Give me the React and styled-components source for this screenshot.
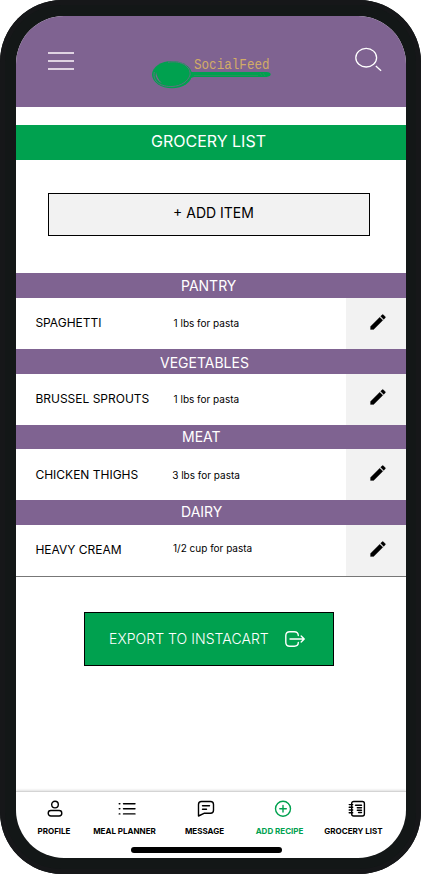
import React from "react";
import styled, { createGlobalStyle } from "styled-components";

const PURPLE = "#7f6391";
const GREEN = "#00a14f";

const Global = createGlobalStyle`
  * { box-sizing: border-box; }
  body { margin: 0; background: #fff; font-family: Inter, "Liberation Sans", sans-serif; color: #000; }
  svg { display: block; flex: none; }
`;

const Phone = styled.div`
  width: 421px;
  height: 874px;
  padding: 16px 15px 16px 16px;
  border-radius: 62px;
  background: #131717;
  box-shadow: inset 0 0 0 5px #161719;
`;
const Screen = styled.div`
  height: 842px;
  display: flex;
  flex-direction: column;
  overflow: hidden;
  border-radius: 48px;
  background: #fff;
`;
const Header = styled.header`
  height: 91px;
  flex: none;
  display: flex;
  align-items: flex-start;
  background: ${PURPLE};
`;
const PlainButton = styled.button`
  border: 0;
  padding: 0;
  background: none;
  color: inherit;
  font-family: inherit;
`;
const MenuButton = styled(PlainButton)`
  width: 26px;
  height: 18px;
  margin: 36px 0 0 32px;
`;
const Logo = styled.div`
  display: grid;
  width: 120px;
  height: 34px;
  margin: 41px 0 0 78px;
  > * { grid-area: 1 / 1; }
`;
const LogoText = styled.span`
  height: 15px;
  margin: 2px 0 0 42px;
  font: 12.6px/15px "Liberation Mono", monospace;
  color: #d2ab67;
  white-space: nowrap;
  transform: scaleY(1.18);
`;
const SearchButton = styled(PlainButton)`
  margin: 31px 0 0 83px;
`;
const Title = styled.h1`
  flex: none;
  height: 35px;
  margin: 18px 0 0;
  padding-right: 5px;
  background: ${GREEN};
  color: #fff;
  font-size: 16px;
  font-weight: 400;
  line-height: 32px;
  text-align: center;
`;
const AddButton = styled(PlainButton)`
  flex: none;
  width: 322px;
  height: 43px;
  margin: 33px 0 37px 32px;
  padding: 0 0 4px 9px;
  border: 1px solid #000;
  background: #f2f2f2;
  font-size: 14px;
`;
const Band = styled.h2`
  flex: none;
  height: ${(p) => p.$height}px;
  margin: 0;
  padding-left: ${(p) => p.$indent}px;
  background: ${PURPLE};
  color: #fff;
  font-size: 14px;
  font-weight: 400;
  line-height: ${(p) => p.$line}px;
`;
const Row = styled.div`
  flex: none;
  display: grid;
  grid-template-columns: ${(p) => p.$split}px 1fr 60px;
  height: 51px;
`;
const ItemName = styled.span`
  padding-left: 19.4px;
  font-size: 12px;
  line-height: ${(p) => p.$line}px;
`;
const Amount = styled.span`
  font-size: 10px;
  line-height: ${(p) => p.$line}px;
`;
const EditButton = styled(PlainButton)`
  display: flex;
  align-items: flex-start;
  padding: ${(p) => p.$top}px 0 0 22px;
  background: #f2f2f2;
`;
const Divider = styled.div`
  flex: none;
  height: 1px;
  background: #777;
`;
const ExportButton = styled(PlainButton)`
  flex: none;
  display: flex;
  align-items: center;
  gap: 16px;
  width: 250px;
  height: 54px;
  margin: 35px 0 0 68px;
  padding: 0 0 1px 24px;
  border: 1px solid #000;
  background: ${GREEN};
  color: #fff;
  font-size: 14px;
  font-weight: 300;
  letter-spacing: 0.05px;
  white-space: nowrap;
`;
const BottomNav = styled.nav`
  flex: none;
  display: flex;
  height: 67px;
  margin-top: auto;
  padding: 8px 0 0 21px;
  border-top: 1px solid #d4d4d4;
  box-shadow: 0 -1px 2px rgba(0, 0, 0, 0.12);
  position: relative;
`;
const NavItem = styled.a`
  flex: none;
  display: flex;
  flex-direction: column;
  align-items: center;
  width: ${(p) => p.$width}px;
  margin-right: ${(p) => p.$gap}px;
  color: ${(p) => (p.$active ? GREEN : "#000")};
`;
const NavIcon = styled.span`
  height: 17px;
  padding-left: ${(p) => p.$shift}px;
`;
const NavLabel = styled.span`
  margin-top: 8px;
  font-size: 8px;
  font-weight: 700;
  line-height: 12px;
  white-space: nowrap;
`;
const HomeIndicator = styled.div`
  position: absolute;
  left: 115px;
  bottom: 5px;
  width: 151px;
  height: 6px;
  border-radius: 3px;
  background: #000;
`;

const MenuIcon = () => (
  <svg width="26" height="18" viewBox="0 0 26 18" fill="#dfd3e2">
    <path d="M0 0h26v2H0zM0 8h26v2H0zM0 16h26v2H0z" />
  </svg>
);
const SpoonIcon = () => (
  <svg width="120" height="34" viewBox="0 0 120 34">
    <path d="M34 14.8 41 15h73.500q4.200 .3 4.200 2.300t-4.200 2.700H42q-4 .4-8 4z" fill={GREEN} />
    <ellipse cx="20" cy="17.600" rx="20" ry="13.600" fill={GREEN} />
    <path d="M2.300 15C0 25 10 30 20 29.500S36 24 38 18M16 5.200C30 3 39 10 38 18" fill="none" stroke={PURPLE} strokeWidth=".7" />
    <path d="M4 15q-1 4 1 7q2 3 5 4q-5-4-6-11z" fill={PURPLE} />
    <path d="M42 18.500h64M108 16l2 3m1-3 2 3" fill="none" stroke="#36895e" strokeWidth=".7" />
  </svg>
);
const SearchIcon = () => (
  <svg width="28" height="26" viewBox="0 0 28 26" fill="none" stroke="#fff" strokeWidth="1.300">
    <ellipse cx="11.200" cy="10.700" rx="10.400" ry="9.300" />
    <path d="m20.800 19 5.300 4.700" />
  </svg>
);
const PencilIcon = () => (
  <svg width="20" height="20" viewBox="0 0 24 24" stroke="#000" strokeWidth=".3">
    <path d="M3 17.250V21h3.750L17.810 9.940l-3.750-3.750L3 17.250zM20.710 7.040a1 1 0 0 0 0-1.410l-2.340-2.340a1 1 0 0 0-1.410 0l-1.830 1.830 3.750 3.750 1.830-1.830z" />
  </svg>
);
const ExportIcon = () => (
  <svg width="20" height="16" viewBox="0 0 20 16" fill="none" stroke="#fff" strokeWidth="1.400" strokeLinecap="round" strokeLinejoin="round">
    <path d="M13.300 4.500Q13.300 .8 9.300 .8H4.800Q.8 .8 .8 4.800v6.400q0 4 4 4h4.500q4 0 4-3.700M5 8h14M16.200 5l3 3-3 3" />
  </svg>
);

const NAV_PATHS = {
  profile: (
    <>
      <circle cx="9" cy="4.600" r="3.300" />
      <rect x="2.200" y="10.500" width="13.600" height="5.500" rx="2.700" />
    </>
  ),
  meals: (
    <>
      <path d="M5.500 3.800H17M5.500 8.700H17M5.500 13.900H17" />
      <path d="M1.200 3.800h.7M1.200 8.700h.7M1.200 13.900h.7" />
    </>
  ),
  message: <path d="M4.500 1.500h9q3 0 3 3v5.800q0 3-3 3H7L1.500 16V4.500q0-3 3-3zM5.500 5.800h7M5.500 9.200h4" />,
  add: (
    <>
      <circle cx="9" cy="8.700" r="7.500" />
      <path d="M9 5.500v6.500M5.800 8.700h6.500" />
    </>
  ),
  grocery: (
    <>
      <rect x="3.700" y="1.500" width="12.700" height="14.500" rx="2" />
      <path d="M1.200 4.600h3.500M1.200 7.300h3.500M1.200 10h3.500M1.200 12.700h3.500M7.500 5.200h6M9.300 7.700h4.200M9.300 10.200h4.200M10.500 12.500h3" />
    </>
  ),
};

const GROUPS = [
  { title: "PANTRY", indent: 165, height: 25, line: 26, name: "SPAGHETTI", nameLine: 50, amount: "1 lbs for pasta", split: 157.6, amountLine: 51, iconTop: 14 },
  { title: "VEGETABLES", indent: 144, height: 25, line: 28, name: "BRUSSEL SPROUTS", nameLine: 50, amount: "1 lbs for pasta", split: 157.6, amountLine: 51, iconTop: 13 },
  { title: "MEAT", indent: 166, height: 24, line: 24, name: "CHICKEN THIGHS", nameLine: 52, amount: "3 lbs for pasta", split: 156.2, amountLine: 53, iconTop: 14 },
  { title: "DAIRY", indent: 165, height: 25, line: 24, name: "HEAVY CREAM", nameLine: 50, amount: "1/2 cup for pasta", split: 157, amountLine: 46, iconTop: 14 },
];

const TABS = [
  { label: "PROFILE", icon: "profile", width: 34, gap: 22, shift: 1 },
  { label: "MEAL PLANNER", icon: "meals", width: 63, gap: 28.5, shift: 4 },
  { label: "MESSAGE", icon: "message", width: 40, gap: 31, shift: 3 },
  { label: "ADD RECIPE", icon: "add", width: 48, gap: 20.5, shift: 7 },
  { label: "GROCERY LIST", icon: "grocery", width: 59, gap: 0, shift: 6 },
];

export default function App() {
  return (
    <>
      <Global />
      <Phone>
        <Screen>
          <Header>
            <MenuButton aria-label="Menu"><MenuIcon /></MenuButton>
            <Logo>
              <SpoonIcon />
              <LogoText>SocialFeed</LogoText>
            </Logo>
            <SearchButton aria-label="Search"><SearchIcon /></SearchButton>
          </Header>
          <Title>GROCERY LIST</Title>
          <AddButton>+ ADD ITEM</AddButton>
          {GROUPS.map((g) => (
            <React.Fragment key={g.title}>
              <Band $height={g.height} $indent={g.indent} $line={g.line}>{g.title}</Band>
              <Row $split={g.split}>
                <ItemName $line={g.nameLine}>{g.name}</ItemName>
                <Amount $line={g.amountLine}>{g.amount}</Amount>
                <EditButton $top={g.iconTop} aria-label={`Edit ${g.name}`}><PencilIcon /></EditButton>
              </Row>
            </React.Fragment>
          ))}
          <Divider />
          <ExportButton>EXPORT TO INSTACART<ExportIcon /></ExportButton>
          <BottomNav>
            {TABS.map((t) => (
              <NavItem key={t.label} $width={t.width} $gap={t.gap} $active={t.icon === "add"}>
                <NavIcon $shift={t.shift}>
                  <svg width="18" height="17" viewBox="0 0 18 17" fill="none" stroke="currentColor" strokeWidth="1.400" strokeLinecap="round" strokeLinejoin="round">
                    {NAV_PATHS[t.icon]}
                  </svg>
                </NavIcon>
                <NavLabel>{t.label}</NavLabel>
              </NavItem>
            ))}
            <HomeIndicator />
          </BottomNav>
        </Screen>
      </Phone>
    </>
  );
}
